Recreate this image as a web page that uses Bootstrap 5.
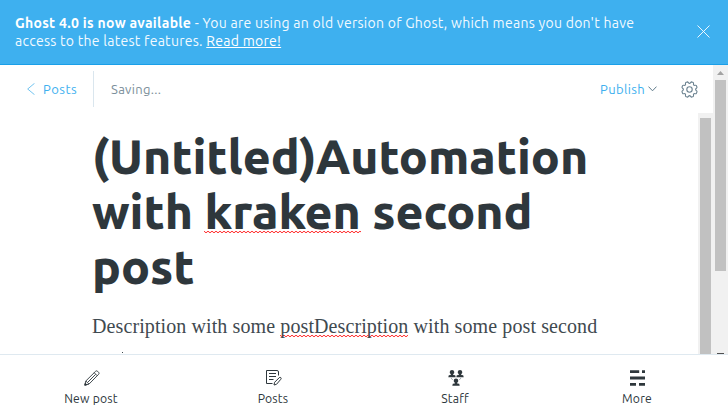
<!DOCTYPE html>
<html lang="en">
<head>
<meta charset="utf-8">
<meta name="viewport" content="width=device-width, initial-scale=1">
<title>Ghost editor</title>
<link href="https://cdn.jsdelivr.net/npm/bootstrap@5.3.0/dist/css/bootstrap.min.css" rel="stylesheet">
<style>
body{font-family:"Ubuntu","Noto Sans","Open Sans",sans-serif;font-size:13px;letter-spacing:.2px;color:#2e373c;background:#fff}
.update-bar{height:65px;background:#3eb0ef;border-bottom:1px solid #1a9fe8;padding:14px 18px 0 15px;font-size:14px;letter-spacing:.27px;line-height:18px;color:#f2faff}
.update-bar strong{color:#fff;font-weight:700;letter-spacing:.3px}
.update-bar a{color:#fff}
.close-x{margin-top:11px}
.workspace{height:289px}
.editor-head{height:48px;font-size:13px;line-height:18px}
.back-link{color:#3eb0ef;width:93px;padding-left:27px;letter-spacing:.5px}
.divider{width:1px;height:36px;background:#dae6ee}
.state{color:#7c8f9b;padding-left:17px;letter-spacing:.3px}
.publish{color:#3eb0ef;letter-spacing:.35px}
.chevron{margin-left:3px}
.gear{margin:0 15px 0 24px}
.canvas-text{padding:16px 0 0 92px}
.post-title{font-size:48px;line-height:55px;font-weight:800;color:#2e373c;letter-spacing:-.04px}
.post-body{font-family:"Liberation Serif",serif;font-size:20px;line-height:32px;color:#3f4a50;margin-top:16px;letter-spacing:.1px}
.typo{background:url("data:image/svg+xml,%3Csvg xmlns='http://www.w3.org/2000/svg' width='4' height='2'%3E%3Cpath d='M0 .2L2 1.800L4 .2' fill='none' stroke='%23ff1010' stroke-width='.9'/%3E%3C/svg%3E") repeat-x}
.post-title .typo{background-position:0 47px}
.post-body .typo{background-position:0 20px}
.next-line{width:1px;height:1px;background:#3f4a50;margin:10px 0 0 30px}
.track{width:15px;background:#f1f1f1}
.thumb{width:11px;background:#c1c1c1}
.arrow-up{width:15px;height:15px}
.inner-track{padding-top:5px}
.outer-thumb{height:191px}
.arrow-stub{width:7px;height:1px;background:#505050}
.tabs{height:64px;border-top:1px solid #dfe9f0;font-size:12.2px;line-height:18px;color:#2e373c}
.tabs a{color:inherit;padding-top:15px}
.tabs svg{margin-bottom:4px;margin-left:1px}
</style>
<script src="https://cdn.jsdelivr.net/npm/bootstrap@5.3.0/dist/js/bootstrap.bundle.min.js"></script>
</head>
<body class="vh-100 overflow-hidden">
<aside class="update-bar d-flex justify-content-between text-nowrap">
  <div>
    <div><strong>Ghost 4.0 is now available</strong> - You are using an old version of Ghost, which means you don't have</div>
    <div>access to the latest features. <a href="#">Read more!</a></div>
  </div>
  <svg class="close-x" width="13" height="13" viewBox="0 0 13 13" fill="none" stroke="#fff" stroke-width=".9"><path d="M.5.5l12 12M12.5.5l-12 12"/></svg>
</aside>
<div class="workspace d-flex overflow-hidden">
  <main class="flex-grow-1 d-flex flex-column">
    <header class="editor-head d-flex align-items-center text-nowrap">
      <a href="#" class="back-link text-decoration-none d-flex align-items-center gap-2"><svg width="8" height="12" viewBox="0 0 8 12" fill="none" stroke="#4fb5ec" stroke-width=".8"><path d="M7.5.3L.7 6l6.8 5.700"/></svg><span>Posts</span></a>
      <span class="divider"></span>
      <span class="state">Saving...</span>
      <span class="publish ms-auto d-flex align-items-center">Publish<svg class="chevron" width="9" height="6" viewBox="0 0 9 6" fill="none" stroke="#5f7b8b"><path d="M.5.6l4 4.200 4-4.200"/></svg></span>
      <svg class="gear" width="17" height="17" viewBox="0 0 17 17" fill="none" stroke="#6b8290" stroke-width="1.100"><circle cx="8.500" cy="8.500" r="2.700"/><path d="M8.500 2.400C9.600 2.400 9.700.6 10.800.9l1.500.7c.8.500-.4 1.700.4 2.500s2.100-.4 2.600.5l.7 1.500c.3 1-1.400 1.200-1.400 2.400s1.700 1.400 1.400 2.400l-.7 1.500c-.5.9-1.800-.3-2.600.5s.4 2-.4 2.500l-1.500.7c-1.100.3-1.200-1.500-2.300-1.500s-1.200 1.800-2.300 1.500l-1.500-.7c-.8-.5.4-1.700-.4-2.500s-2.100.4-2.600-.5L1 10.900c-.3-1 1.400-1.200 1.400-2.400S.7 7.100 1 6.100l.7-1.500c.5-.9 1.800.3 2.600-.5s-.4-2 .4-2.500L6.200.9C7.300.6 7.400 2.400 8.500 2.400z"/></svg>
    </header>
    <div class="d-flex flex-grow-1 overflow-hidden">
      <article class="canvas-text flex-grow-1 text-nowrap">
        <h1 class="post-title mb-0">(Untitled)Automation<br>with <span class="typo">kraken</span> second<br>post</h1>
        <p class="post-body mb-0">Description with some <span class="typo">postDescription</span> with some post second</p>
        <div class="next-line"></div>
      </article>
      <div class="track inner-track d-flex justify-content-center"><div class="thumb h-100"></div></div>
    </div>
  </main>
  <div class="track d-flex flex-column align-items-center">
    <svg class="arrow-up" viewBox="0 0 15 15"><path d="M4 10h7L7.500 6z" fill="#a3a3a3"/></svg>
    <div class="thumb outer-thumb"></div>
    <div class="arrow-stub mt-auto"></div>
  </div>
</div>
<nav class="tabs row g-0 text-center">
  <a href="#" class="col text-decoration-none d-flex flex-column align-items-center">
    <svg width="16" height="16" viewBox="0 0 16 16" fill="none" stroke="#2e373c"><path d="M.8 15.200l1-4.200L11.600 1.300q1-.9 2 0l1 1q1 1 0 2L5 14.100zM1.800 11L5 14.100M10.200 2.700l3 3M4 12l7.600-7.600" stroke-width=".9"/><path d="M.8 15.200l.5-2 1.500 1.500z" fill="#2e373c"/></svg><span>New post</span></a>
  <a href="#" class="col text-decoration-none d-flex flex-column align-items-center">
    <svg width="16" height="16" viewBox="0 0 16 16" fill="none" stroke="#2e373c"><path d="M12.500 5.500V2q0-1.500-1.500-1.500H.5v13h6M3 3.500h7M3 6.500h7M3 9.500h4.500M8 15l.6-2.700 4.700-4.700q.7-.7 1.500 0t0 1.700L10.500 14.300z"/></svg><span>Posts</span></a>
  <a href="#" class="col text-decoration-none d-flex flex-column align-items-center">
    <svg width="16" height="16" viewBox="0 0 16 16" fill="#2e373c"><defs><g id="person"><path d="M1.300 1.800Q1.300 0 3.500 0t2.200 1.800v1.200L4.700 4.300v.6L6.700 5.300l.5 1.900H-.2l.5-1.900 2-.4v-.6L1.300 3z"/></g></defs><use href="#person" x=".5"/><use href="#person" x="8.500"/><use href="#person" x="4.500" y="8.500"/><path d="M3 8l1.800 2M13 8l-1.800 2" stroke="#8d989e" stroke-width=".8"/></svg><span>Staff</span></a>
  <a href="#" class="col text-decoration-none d-flex flex-column align-items-center">
    <svg width="16" height="16" viewBox="0 0 16 16" fill="#2e373c"><path d="M0 .2h9.200v2.800H0zM12 .2h3v2.800h-3zM0 6.600h15v2.800H0zM0 13h6v2.800H0zM9 13h6v2.800H9z"/></svg><span>More</span></a>
</nav>
</body>
</html>
